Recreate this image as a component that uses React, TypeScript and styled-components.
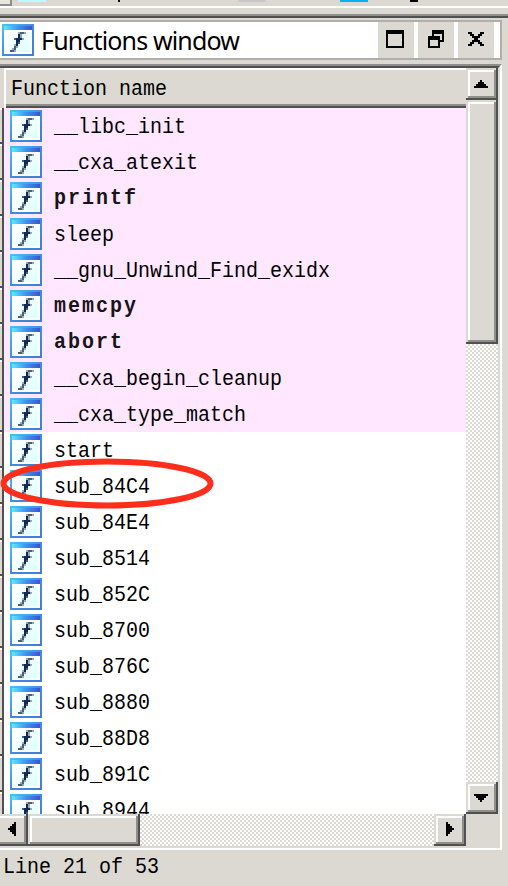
import React from "react";
import styled, { createGlobalStyle } from "styled-components";

const FACE = "#dcd9d2";
const SHADE = "#8e8f8d";
const DARK = "#505050";

const GlobalStyle = createGlobalStyle`
  * { box-sizing: border-box; }
  html, body { margin: 0; background: ${FACE}; overflow: hidden; }
`;

const Screen = styled.div`
  position: relative;
  width: 508px;
  height: 886px;
  overflow: hidden;
  background: ${FACE};
  color: #000;
  font-family: "Liberation Mono", monospace;
  font-size: 20px;
  display: flex;
  flex-direction: column;
`;

const ToolbarEdge = styled.div`
  height: 18px;
  flex: none;
  display: flex;
  background: linear-gradient(${FACE} 6px, #fff 6px, #fff 8px, ${FACE} 8px, ${FACE} 14px, ${SHADE} 14px, ${SHADE} 16px, ${DARK} 16px);
`;

const Fragment = styled.i<{ $w: number; $gap: number; $c: string }>`
  width: ${(p) => p.$w}px;
  height: 2px;
  margin-left: ${(p) => p.$gap}px;
  background: ${(p) => p.$c};
`;

const ToolButtonCorner = styled.i`
  width: 12px;
  height: 6px;
  border: solid ${SHADE};
  border-width: 0 2px 2px 0;
  background: #e8e6e1;
`;

const TitleBar = styled.header`
  height: 40px;
  width: 502px;
  flex: none;
  margin-top: 2px;
  border: solid #b1aeaa;
  border-width: 2px 2px 2px 0;
  background: #fff;
  display: flex;
  padding: 0 4px 0 2px;
  align-items: center;
`;

const Title = styled.h1`
  flex: 1;
  margin: 0 0 0 7px;
  font: 400 25px/34px "Noto Sans", sans-serif;
  letter-spacing: -0.85px;
  white-space: nowrap;
`;

const Controls = styled.div`
  display: flex;
  gap: 4px;
  height: 36px;
  padding-right: 2px;
`;

const Control = styled.button`
  width: 36px;
  height: 36px;
  padding: 0;
  border: 0;
  background: ${FACE};
  display: block;
  svg { display: block; }
`;

const Frame = styled.main`
  width: 502px;
  height: 786px;
  flex: none;
  margin-top: 4px;
  border-top: 2px solid ${SHADE};
  border-right: 2px solid #fff;
  border-bottom: 2px solid #fff;
`;

const Inner = styled.div`
  height: 782px;
  border-top: 2px solid ${DARK};
  border-right: 2px solid ${FACE};
  border-bottom: 2px solid ${FACE};
  display: grid;
  grid-template-columns: 466px 32px;
  grid-template-rows: 746px 32px;
`;

const Table = styled.section`
  min-height: 0;
  overflow: hidden;
`;

const Header = styled.div`
  height: 40px;
  padding-left: 4px;
  background: ${FACE};
`;

const HeaderCell = styled.div`
  height: 40px;
  border: solid #fff;
  border-width: 2px 0 0 2px;
  padding: 0 0 0 5px;
  line-height: 38px;
  box-shadow: inset 0 -2px ${DARK}, inset 0 -4px ${SHADE};
`;

const Text = styled.span<{ $bold?: boolean }>`
  display: inline-block;
  white-space: pre;
  transform: scaleY(${(p) => (p.$bold ? 1.06 : 1.14)});
  letter-spacing: ${(p) => (p.$bold ? "2px" : "-0.002px")};
  font-weight: ${(p) => (p.$bold ? 700 : 400)};
  color: ${(p) => (p.$bold ? "#181418" : "#000")};
`;

const Body = styled.div`
  display: flex;
`;

const RowHeads = styled.div`
  width: 4px;
  flex: none;
  border-right: 2px solid ${DARK};
`;

const RowHead = styled.div`
  height: 36px;
  border-top: 2px solid #fff;
  border-bottom: 2px solid ${DARK};
`;

const Rows = styled.div`
  flex: 1;
  background: #fff;
`;

const Row = styled.div<{ $library: boolean }>`
  height: 36px;
  padding-left: 6px;
  display: flex;
  align-items: center;
  gap: 12px;
  background: ${(p) => (p.$library ? "#ffe8ff" : "#fff")};
  svg { flex: none; }
`;

const Track = styled.div<{ $horizontal?: boolean }>`
  display: flex;
  flex-direction: ${(p) => (p.$horizontal ? "row" : "column")};
  overflow: hidden;
  background: repeating-conic-gradient(${FACE} 0 25%, #fff 0 50%) 0 0 / 4px 4px;
`;

const Raised = styled.div<{ $w: number; $h: number; $end?: boolean; $cut?: number }>`
  width: ${(p) => p.$w}px;
  height: ${(p) => p.$h}px;
  flex: none;
  margin: ${(p) => (p.$end ? "auto 0 0 auto" : `0 0 0 ${-(p.$cut ?? 0)}px`)};
  padding-left: ${(p) => p.$cut ?? 0}px;
  background: ${FACE};
  box-shadow: inset -2px -2px ${DARK}, inset 2px 2px ${FACE},
    inset -4px -4px ${SHADE}, inset 4px 4px #fff;
  svg { display: block; }
`;

const Status = styled.footer`
  padding: 5px 0 0 3px;
  line-height: 24px;
`;

const Annotation = styled.svg`
  position: absolute;
  left: 0;
  top: 455px;
`;

function FunctionIcon() {
  return (
    <svg width="32" height="32" viewBox="0 0 16 16" shapeRendering="crispEdges">
      <defs>
        <linearGradient id="edge" x2="1" y2="1">
          <stop stopColor="#41c8f8" />
          <stop offset=".5" stopColor="#418de0" />
          <stop offset="1" stopColor="#427bd5" />
        </linearGradient>
        <linearGradient id="cap">
          <stop stopColor="#60e8ff" />
          <stop offset=".5" stopColor="#3c94ed" />
          <stop offset="1" stopColor="#3b54d5" />
        </linearGradient>
        <linearGradient id="paper" x2="1" y2="1">
          <stop stopColor="#fff" />
          <stop offset="1" stopColor="#dcffff" />
        </linearGradient>
      </defs>
      <path fill="url(#edge)" d="M0 0h16v16H0z" />
      <path fill="url(#cap)" d="M1 1h14v2H1z" />
      <path fill="#fff" d="M1 3h14v12H1z" />
      <path fill="url(#paper)" d="M2 4h12v10H2z" />
      <path fill="#10285a" d="M8 5h1v2H8zM7 7h3v1H7zM7 8h2v1H7zM7 9h1v2H7z" />
      <path fill="#456078" d="M9 4h2v1H9zM6 7h1v1H6zM8 9h1v1H8zM6 11h1v2H6zM4 13h2v1H4z" />
      <path fill="#9aa7b4" d="M8 4h1v1H8zM11 4h1v1h-1zM9 5h1v2H9zM10 7h1v1h-1zM6 10h1v1H6zM7 11h1v1H7zM5 12h1v1H5zM6 13h1v1H6z" />
    </svg>
  );
}

const arrows = {
  up: "M7 6h1v1h1v1h1v1h1v1H4V9h1V8h1V7h1z",
  down: "M4 6h7v1h-1v1H9v1H8v1H7V9H6V8H5V7H4z",
  left: "M8 4v7H7v-1H6V9H5V8H4V7h1V6h1V5h1V4z",
  right: "M6 4h1v1h1v1h1v1h1v1H9v1H8v1H7v1H6z",
};

function Arrow({ dir }: { dir: keyof typeof arrows }) {
  return (
    <svg width="32" height="32" viewBox="0 0 16 16" shapeRendering="crispEdges">
      <path d={arrows[dir]} />
    </svg>
  );
}

const functions: { name: string; library: boolean; bold?: boolean }[] = [
  { name: "__libc_init", library: true },
  { name: "__cxa_atexit", library: true },
  { name: "printf", library: true, bold: true },
  { name: "sleep", library: true },
  { name: "__gnu_Unwind_Find_exidx", library: true },
  { name: "memcpy", library: true, bold: true },
  { name: "abort", library: true, bold: true },
  { name: "__cxa_begin_cleanup", library: true },
  { name: "__cxa_type_match", library: true },
  { name: "start", library: false },
  { name: "sub_84C4", library: false },
  { name: "sub_84E4", library: false },
  { name: "sub_8514", library: false },
  { name: "sub_852C", library: false },
  { name: "sub_8700", library: false },
  { name: "sub_876C", library: false },
  { name: "sub_8880", library: false },
  { name: "sub_88D8", library: false },
  { name: "sub_891C", library: false },
  { name: "sub_8944", library: false },
];

const controlIcons = [
  { label: "Maximize", path: "M4 4h9v9H4zM5 6v6h7V6z" },
  { label: "Restore", path: "M7 4h6v6h-2v3H5V7h2zM8 6v1h3v2h1V6zM6 9v3h4V9z" },
  { label: "Close", path: "M5 5h2v1h1v1h2V6h1V5h2v1h-1v1h-1v1h-1v1h1v1h1v1h1v1h-2v-1h-1v-1H8v1H7v1H5v-1h1v-1h1V9h1V8H7V7H6V6H5z" },
];

export default function App() {
  return (
    <Screen>
      <GlobalStyle />
      <ToolbarEdge>
        <ToolButtonCorner />
        <Fragment $gap={6} $w={28} $c="#b7ffff" />
        <Fragment $gap={72} $w={2} $c="#000" />
        <Fragment $gap={118} $w={28} $c="#c8c8c8" />
        <Fragment $gap={74} $w={28} $c="#00b2ee" />
        <Fragment $gap={42} $w={8} $c="#000" />
      </ToolbarEdge>
      <TitleBar>
        <FunctionIcon />
        <Title>Functions window</Title>
        <Controls>
          {controlIcons.map((icon) => (
            <Control key={icon.label} aria-label={icon.label}>
              <svg width="36" height="36" viewBox="0 0 18 18" shapeRendering="crispEdges">
                <path fillRule="evenodd" d={icon.path} />
              </svg>
            </Control>
          ))}
        </Controls>
      </TitleBar>
      <Frame>
        <Inner>
          <Table>
            <Header>
              <HeaderCell><Text>Function name</Text></HeaderCell>
            </Header>
            <Body>
              <RowHeads>{functions.map((fn) => <RowHead key={fn.name} />)}</RowHeads>
              <Rows>
                {functions.map((fn) => (
                  <Row key={fn.name} $library={fn.library}>
                    <FunctionIcon />
                    <Text $bold={fn.bold}>{fn.name}</Text>
                  </Row>
                ))}
              </Rows>
            </Body>
          </Table>
          <Track>
            <Raised $w={32} $h={32}><Arrow dir="up" /></Raised>
            <Raised $w={32} $h={244} />
            <Raised $w={32} $h={32} $end><Arrow dir="down" /></Raised>
          </Track>
          <Track $horizontal>
            <Raised $w={32} $h={32} $cut={4}><Arrow dir="left" /></Raised>
            <Raised $w={112} $h={32} />
            <Raised $w={32} $h={32} $end><Arrow dir="right" /></Raised>
          </Track>
        </Inner>
      </Frame>
      <Status><Text>Line 21 of 53</Text></Status>
      <Annotation width="216" height="56">
        <ellipse cx="107" cy="28.5" rx="103.5" ry="22" fill="none" stroke="#ff2d1c" strokeWidth="6" />
      </Annotation>
    </Screen>
  );
}
